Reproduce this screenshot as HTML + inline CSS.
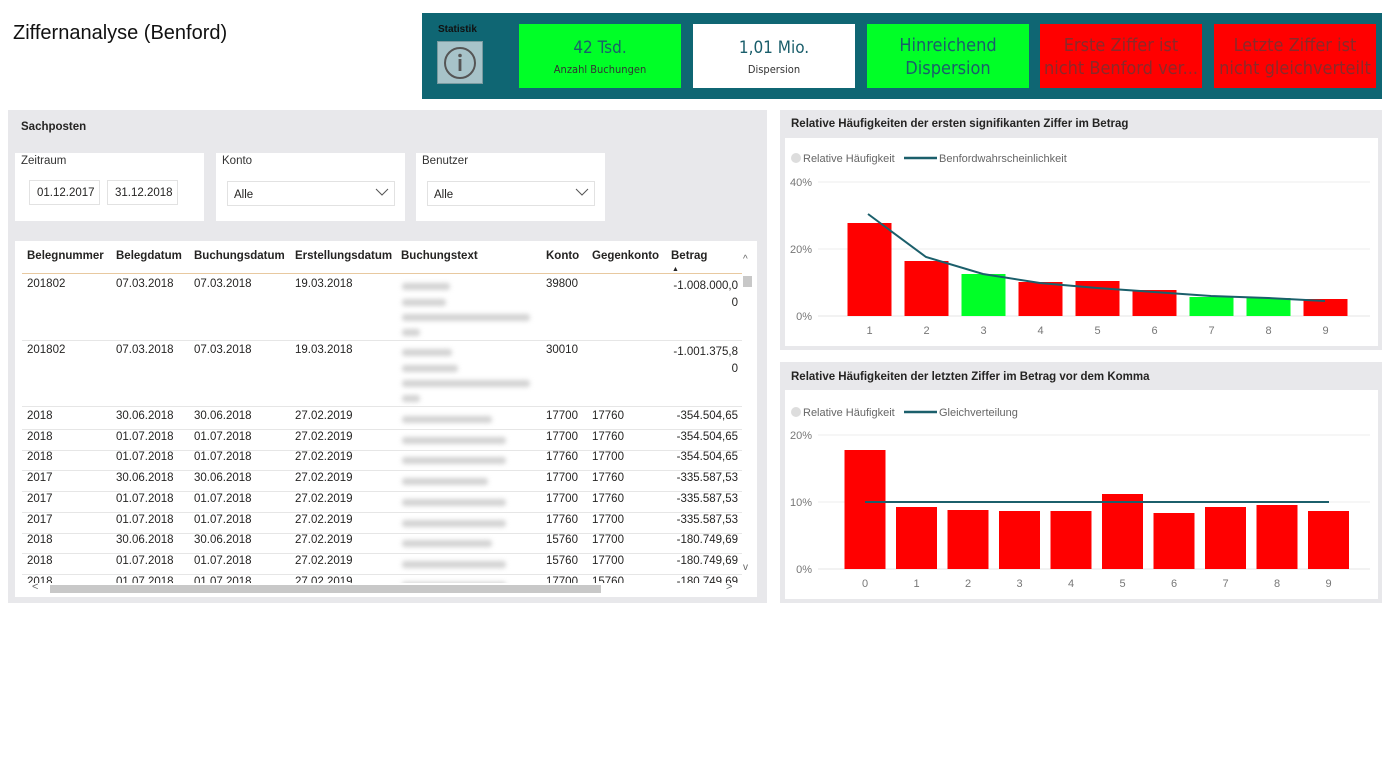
<!DOCTYPE html>
<html><head><meta charset="utf-8"><style>
*{margin:0;padding:0;box-sizing:border-box}
body{width:1386px;height:775px;background:#fff;position:relative;overflow:hidden;font-family:"Segoe UI","Liberation Sans",sans-serif;color:#252423}
.a{position:absolute}
.card{position:absolute;top:24px;height:64px;width:162px;text-align:center;font-family:"DejaVu Sans Condensed","Liberation Sans Narrow","Liberation Sans",sans-serif}
.big{font-size:17px;color:#1a5e6b}
.big2{font-size:18px;color:#1a5e6b}
.small{font-size:11px;color:#333}
.red{background:#ff0000}.red .big2{color:#8a2a2a}
.green{background:#00ff27}
.t{position:absolute;font-size:11.5px;white-space:nowrap}
.h{font-weight:bold;font-size:11.5px;position:absolute;white-space:nowrap}
.blur{position:absolute;height:7px;background:#d2d2d2;filter:blur(2.5px);border-radius:3px}
.sep{position:absolute;left:22px;width:720px;height:1px;background:#e6e6e6}
.r{text-align:right}
</style></head><body>
<div class="a" style="left:13px;top:22px;font-size:20px;color:#111">Ziffernanalyse (Benford)</div>

<div class="a" style="left:422px;top:13px;width:960px;height:86px;background:#0f6673"></div>
<div class="a" style="left:438px;top:24px;font-size:10px;font-weight:bold;color:#111">Statistik</div>
<div class="a" style="left:437px;top:41px;width:46px;height:43px;background:#a7c3c9;border:1px solid #7a9aa0"></div>
<svg class="a" style="left:442px;top:45px" width="36" height="36"><circle cx="18" cy="18" r="15" fill="none" stroke="#555" stroke-width="2"/><circle cx="18" cy="10.5" r="1.8" fill="#555"/><rect x="16.6" y="14" width="2.8" height="12" fill="#555"/></svg>
<div class="card green" style="left:519px"><div class="big" style="margin-top:14px">42 Tsd.</div><div class="small" style="margin-top:5px">Anzahl Buchungen</div></div>
<div class="card" style="left:693px;background:#fff"><div class="big" style="margin-top:14px">1,01 Mio.</div><div class="small" style="margin-top:5px">Dispersion</div></div>
<div class="card green" style="left:867px"><div class="big2" style="margin-top:10px;line-height:23px">Hinreichend<br>Dispersion</div></div>
<div class="card red" style="left:1040px"><div class="big2" style="margin-top:10px;line-height:23px">Erste Ziffer ist<br>nicht Benford ver...</div></div>
<div class="card red" style="left:1214px"><div class="big2" style="margin-top:10px;line-height:23px">Letzte Ziffer ist<br>nicht gleichverteilt</div></div>

<!-- left panel -->
<div class="a" style="left:8px;top:110px;width:759px;height:493px;background:#e8e8eb"></div>
<div class="h" style="left:21px;top:121px">Sachposten</div>
<div class="a" style="left:15px;top:153px;width:189px;height:68px;background:#fff"></div>
<div class="a" style="left:216px;top:153px;width:189px;height:68px;background:#fff"></div>
<div class="a" style="left:416px;top:153px;width:189px;height:68px;background:#fff"></div>
<div class="t" style="left:21px;top:155px;color:#333">Zeitraum</div>
<div class="t" style="left:222px;top:155px;color:#333">Konto</div>
<div class="t" style="left:422px;top:155px;color:#333">Benutzer</div>
<div class="a" style="left:29px;top:180px;width:71px;height:25px;border:1px solid #e2e2e2;font-size:11.5px;padding:6px 0 0 7px">01.12.2017</div>
<div class="a" style="left:107px;top:180px;width:71px;height:25px;border:1px solid #e2e2e2;font-size:11.5px;padding:6px 0 0 7px">31.12.2018</div>
<div class="a" style="left:227px;top:181px;width:168px;height:25px;border:1px solid #e2e2e2;font-size:11.5px;padding:7px 0 0 6px">Alle</div>
<div class="a" style="left:427px;top:181px;width:168px;height:25px;border:1px solid #e2e2e2;font-size:11.5px;padding:7px 0 0 6px">Alle</div>
<svg class="a" style="left:375px;top:188px" width="14" height="9"><path d="M1 1 L7 7 L13 1" fill="none" stroke="#555" stroke-width="1"/></svg>
<svg class="a" style="left:575px;top:188px" width="14" height="9"><path d="M1 1 L7 7 L13 1" fill="none" stroke="#555" stroke-width="1"/></svg>

<div class="a" style="left:15px;top:241px;width:742px;height:356px;background:#fff"></div>
<div class="h" style="left:27px;top:250px">Belegnummer</div>
<div class="h" style="left:116px;top:250px">Belegdatum</div>
<div class="h" style="left:194px;top:250px">Buchungsdatum</div>
<div class="h" style="left:295px;top:250px">Erstellungsdatum</div>
<div class="h" style="left:401px;top:250px">Buchungstext</div>
<div class="h" style="left:546px;top:250px">Konto</div>
<div class="h" style="left:592px;top:250px">Gegenkonto</div>
<div class="h" style="left:671px;top:250px">Betrag</div>
<div class="a" style="left:672px;top:266px;font-size:7px">▲</div>
<div class="a" style="left:22px;top:273px;width:720px;height:1px;background:#e8c9a0"></div>

<div class="t" style="left:27px;top:278px">201802</div><div class="t" style="left:116px;top:278px">07.03.2018</div><div class="t" style="left:194px;top:278px">07.03.2018</div><div class="t" style="left:295px;top:278px">19.03.2018</div><div class="t" style="left:546px;top:278px">39800</div>
<div class="t r" style="left:640px;top:278px;width:98px;line-height:17px">-1.008.000,0<br>0</div>
<div class="blur" style="left:402px;top:283px;width:48px"></div><div class="blur" style="left:402px;top:299px;width:44px"></div><div class="blur" style="left:402px;top:314px;width:128px"></div><div class="blur" style="left:402px;top:329px;width:18px"></div>
<div class="sep" style="top:340px"></div>
<div class="t" style="left:27px;top:344px">201802</div><div class="t" style="left:116px;top:344px">07.03.2018</div><div class="t" style="left:194px;top:344px">07.03.2018</div><div class="t" style="left:295px;top:344px">19.03.2018</div><div class="t" style="left:546px;top:344px">30010</div>
<div class="t r" style="left:640px;top:344px;width:98px;line-height:17px">-1.001.375,8<br>0</div>
<div class="blur" style="left:402px;top:349px;width:50px"></div><div class="blur" style="left:402px;top:365px;width:56px"></div><div class="blur" style="left:402px;top:380px;width:128px"></div><div class="blur" style="left:402px;top:395px;width:18px"></div>
<div class="sep" style="top:406px"></div>

<div id="rows"></div>
<script>
var d=[["2018","30.06.2018","30.06.2018","17700","17760","-354.504,65",90],["2018","01.07.2018","01.07.2018","17700","17760","-354.504,65",104],["2018","01.07.2018","01.07.2018","17760","17700","-354.504,65",104],["2017","30.06.2018","30.06.2018","17700","17760","-335.587,53",86],["2017","01.07.2018","01.07.2018","17700","17760","-335.587,53",104],["2017","01.07.2018","01.07.2018","17760","17700","-335.587,53",104],["2018","30.06.2018","30.06.2018","15760","17700","-180.749,69",90],["2018","01.07.2018","01.07.2018","15760","17700","-180.749,69",104],["2018","01.07.2018","01.07.2018","17700","15760","-180.749,69",104]];
var h="";for(var i=0;i<d.length;i++){var y=410+i*20.7;var r=d[i];
h+='<div class="t" style="left:27px;top:'+y+'px">'+r[0]+'</div><div class="t" style="left:116px;top:'+y+'px">'+r[1]+'</div><div class="t" style="left:194px;top:'+y+'px">'+r[2]+'</div><div class="t" style="left:295px;top:'+y+'px">27.02.2019</div><div class="blur" style="left:402px;top:'+(y+6)+'px;width:'+r[6]+'px"></div><div class="t" style="left:546px;top:'+y+'px">'+r[3]+'</div><div class="t" style="left:592px;top:'+y+'px">'+r[4]+'</div><div class="t r" style="left:640px;top:'+y+'px;width:98px">'+r[5]+'</div>';
if(i<8)h+='<div class="sep" style="top:'+(y+19)+'px"></div>';}
document.getElementById('rows').innerHTML=h;
</script>
<div class="a" style="left:22px;top:583px;width:720px;height:14px;background:#fff"></div>
<div class="a" style="left:50px;top:585px;width:551px;height:8px;background:#c8c8c8"></div>
<div class="a" style="left:32px;top:581px;font-size:11px;color:#666;line-height:12px">&lt;</div>
<div class="a" style="left:726px;top:581px;font-size:11px;color:#666;line-height:12px">&gt;</div>
<div class="a" style="left:743px;top:254px;font-size:10px;color:#666">^</div>
<div class="a" style="left:743px;top:276px;width:9px;height:11px;background:#c8c8c8"></div>
<div class="a" style="left:743px;top:562px;font-size:10px;color:#666">v</div>

<!-- chart 1 -->
<div class="a" style="left:780px;top:110px;width:602px;height:240px;background:#e8e8eb"></div>
<div class="a" style="left:785px;top:138px;width:593px;height:208px;background:#fff"></div>
<div class="h" style="left:791px;top:118px">Relative Häufigkeiten der ersten signifikanten Ziffer im Betrag</div>
<svg class="a" style="left:780px;top:110px" width="602" height="240" font-family="Segoe UI, Liberation Sans, sans-serif">
<circle cx="16" cy="48" r="5" fill="#ddd"/><text x="23" y="52" font-size="11" fill="#666">Relative Häufigkeit</text>
<line x1="124" y1="48" x2="157" y2="48" stroke="#1b5f6b" stroke-width="2.5"/><text x="159" y="52" font-size="11" fill="#666">Benfordwahrscheinlichkeit</text>
<line x1="38" y1="72" x2="590" y2="72" stroke="#eee"/><line x1="38" y1="139" x2="590" y2="139" stroke="#eee"/><line x1="38" y1="206" x2="590" y2="206" stroke="#e4e4e4"/>
<text x="32" y="76" font-size="11" fill="#777" text-anchor="end">40%</text><text x="32" y="143" font-size="11" fill="#777" text-anchor="end">20%</text><text x="32" y="210" font-size="11" fill="#777" text-anchor="end">0%</text>
<g id="b1"></g>
<polyline points="88,104 146,147 203,164 260,173 317,178 374,182 431,186 488,188 545,191" fill="none" stroke="#1b5f6b" stroke-width="2"/>
</svg>
<!-- chart 2 -->
<div class="a" style="left:780px;top:362px;width:602px;height:241px;background:#e8e8eb"></div>
<div class="a" style="left:785px;top:390px;width:593px;height:209px;background:#fff"></div>
<div class="h" style="left:791px;top:371px">Relative Häufigkeiten der letzten Ziffer im Betrag vor dem Komma</div>
<svg class="a" style="left:780px;top:362px" width="602" height="241" font-family="Segoe UI, Liberation Sans, sans-serif">
<circle cx="16" cy="50" r="5" fill="#ddd"/><text x="23" y="54" font-size="11" fill="#666">Relative Häufigkeit</text>
<line x1="124" y1="50" x2="157" y2="50" stroke="#1b5f6b" stroke-width="2.5"/><text x="159" y="54" font-size="11" fill="#666">Gleichverteilung</text>
<line x1="38" y1="73" x2="590" y2="73" stroke="#eee"/><line x1="38" y1="140" x2="590" y2="140" stroke="#eee"/><line x1="38" y1="207" x2="590" y2="207" stroke="#e4e4e4"/>
<text x="32" y="77" font-size="11" fill="#777" text-anchor="end">20%</text><text x="32" y="144" font-size="11" fill="#777" text-anchor="end">10%</text><text x="32" y="211" font-size="11" fill="#777" text-anchor="end">0%</text>
<g id="b2"></g>
<line x1="85" y1="140" x2="549" y2="140" stroke="#1b5f6b" stroke-width="2"/>
</svg>
<script>
var t1=[223,261,274,282,281,290,297,298,299],c1=["r","r","g","r","r","r","g","g","r"],s="";
for(var i=0;i<9;i++){var cx=89.5+i*57;s+='<rect x="'+(cx-22)+'" y="'+(t1[i]-110)+'" width="44" height="'+(316-t1[i])+'" fill="'+(c1[i]=="r"?"#ff0000":"#00ff27")+'"/><text x="'+cx+'" y="224" font-size="11" fill="#777" text-anchor="middle">'+(i+1)+'</text>';}
document.getElementById('b1').innerHTML=s;
var t2=[450,507,510,511,511,494,513,507,505,511];s="";
for(var i=0;i<10;i++){var cx=85+i*51.5;s+='<rect x="'+(cx-20.5)+'" y="'+(t2[i]-362)+'" width="41" height="'+(569-t2[i])+'" fill="#ff0000"/><text x="'+cx+'" y="225" font-size="11" fill="#777" text-anchor="middle">'+i+'</text>';}
document.getElementById('b2').innerHTML=s;
</script>
</body></html>
